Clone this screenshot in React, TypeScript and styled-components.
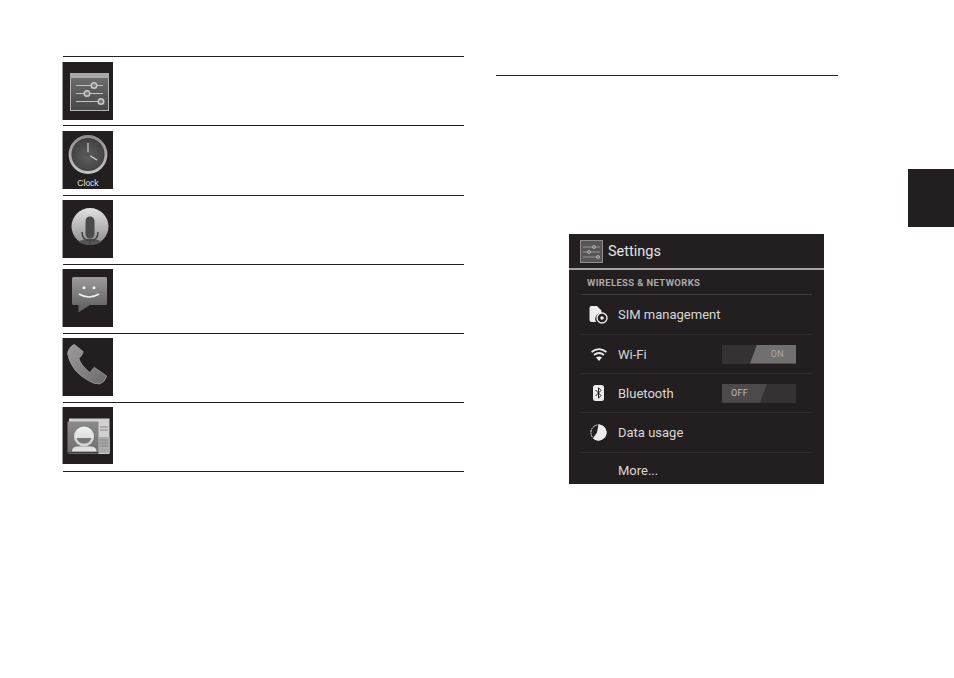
import React from 'react';
import styled, {createGlobalStyle} from 'styled-components';

const GlobalStyle = createGlobalStyle`
  html, body {
    margin: 0;
    padding: 0;
    background: #fff;
  }
`

const tileColor = '#231f20'

const SettingsGlyph = () => (
    <svg width="50" height="58" viewBox="0 0 50 58">
        <defs>
            <linearGradient id="panelBody" x1="0" y1="0" x2="0" y2="1">
                <stop offset="0" stopColor="#707070"/>
                <stop offset="1" stopColor="#474747"/>
            </linearGradient>
        </defs>
        <rect x="8.5" y="11.5" width="38" height="37" fill="url(#panelBody)" stroke="#b5b5b5"/>
        <rect x="8" y="11" width="39" height="5" fill="#a9a9a9"/>
        <path d="M14 23.5H41M14 31.5H41M14 39.5H42" stroke="#c2c2c2" strokeWidth="1.1"/>
        <circle cx="32" cy="23.5" r="2.8" fill="#7b7b7b" stroke="#c8c8c8" strokeWidth="1.4"/>
        <circle cx="25" cy="31.5" r="2.8" fill="#7b7b7b" stroke="#c8c8c8" strokeWidth="1.4"/>
        <circle cx="39" cy="39.5" r="2.8" fill="#7b7b7b" stroke="#c8c8c8" strokeWidth="1.4"/>
    </svg>
)

const ClockGlyph = () => (
    <svg width="50" height="46" viewBox="0 0 50 46">
        <defs>
            <linearGradient id="clockRing" x1="0" y1="0" x2="0" y2="1">
                <stop offset="0" stopColor="#8f8f8f"/>
                <stop offset="1" stopColor="#c4c4c4"/>
            </linearGradient>
            <radialGradient id="clockFace" cx="0.5" cy="0.55" r="0.6">
                <stop offset="0" stopColor="#5f5f5f"/>
                <stop offset="1" stopColor="#3a3a3a"/>
            </radialGradient>
        </defs>
        <circle cx="26" cy="23.5" r="18" fill="url(#clockFace)" stroke="url(#clockRing)" strokeWidth="2.8"/>
        <path d="M26 12V23.5L35 29" fill="none" stroke="#d8d8d8" strokeWidth="1.1"/>
        <circle cx="26" cy="23.5" r="2.6" fill="#555"/>
    </svg>
)

const MicGlyph = () => (
    <svg width="50" height="58" viewBox="0 0 50 58">
        <defs>
            <linearGradient id="micDisc" x1="0" y1="0" x2="0" y2="1">
                <stop offset="0" stopColor="#e2e2e2"/>
                <stop offset="1" stopColor="#8c8c8c"/>
            </linearGradient>
        </defs>
        <circle cx="28" cy="26.5" r="18.5" fill="url(#micDisc)"/>
        <path d="M16 41.5Q28 36 40 41.5Q35 45 28 45Q21 45 16 41.5Z" fill="#555"/>
        <rect x="23.5" y="16.5" width="9" height="22" rx="4.5" fill="#4a4a4a"/>
        <path d="M20 32Q20 40.5 28 40.5Q36 40.5 36 32M28 40.5V45" fill="none" stroke="#444" strokeWidth="1.5"/>
    </svg>
)

const MessageGlyph = () => (
    <svg width="50" height="58" viewBox="0 0 50 58">
        <defs>
            <linearGradient id="bubble" x1="0" y1="0" x2="0" y2="1">
                <stop offset="0" stopColor="#9b9b9b"/>
                <stop offset="1" stopColor="#5c5c5c"/>
            </linearGradient>
        </defs>
        <path d="M11.5 8H43.5Q45 8 45 9.5V34.5Q45 36 43.5 36H28L16.5 43.5V36H11.5Q10 36 10 34.5V9.5Q10 8 11.5 8Z"
              fill="url(#bubble)"/>
        <circle cx="22" cy="18.8" r="1.5" fill="#f2f2f2"/>
        <circle cx="32" cy="18.8" r="1.5" fill="#f2f2f2"/>
        <path d="M17 25Q27 31 37 25" fill="none" stroke="#f2f2f2" strokeWidth="1.7"/>
    </svg>
)

const PhoneGlyph = () => (
    <svg width="50" height="58" viewBox="0 0 50 58">
        <defs>
            <linearGradient id="handset" x1="0" y1="0" x2="1" y2="1">
                <stop offset="0" stopColor="#9c9c9c"/>
                <stop offset="1" stopColor="#6b6b6b"/>
            </linearGradient>
        </defs>
        <path d="M5.5 15.5Q6.5 9.5 12.3 6.3L21.3 13.7Q20 18 17 20.3Q18 24 20.3 27Q24 31.5 28 34.7Q30.5 31 32.3 29.3L44.7 38Q43 44 38 46Q31 46 26.3 42.5Q18 38 13 32Q7 24 5.5 15.5Z"
              fill="url(#handset)" stroke="#b0b0b0" strokeWidth="0.6"/>
    </svg>
)

const ContactGlyph = () => (
    <svg width="50" height="57" viewBox="0 0 50 57">
        <defs>
            <linearGradient id="cardFace" x1="0" y1="0" x2="0" y2="1">
                <stop offset="0" stopColor="#8a8a8a"/>
                <stop offset="1" stopColor="#6e6e6e"/>
            </linearGradient>
            <linearGradient id="cardHead" x1="0" y1="0" x2="0" y2="1">
                <stop offset="0" stopColor="#f0f0f0"/>
                <stop offset="1" stopColor="#d2d2d2"/>
            </linearGradient>
        </defs>
        <rect x="7" y="11.5" width="40.5" height="35.5" fill="#d0d0d0"/>
        <rect x="36.5" y="30" width="11.5" height="16" fill="#a9a9a9"/>
        <rect x="5.5" y="14.5" width="31" height="32" fill="url(#cardFace)"/>
        <path d="M38 20H46M38 23H46M38 33H46M38 36H46M38 39H46" stroke="#888" strokeWidth="1"/>
        <circle cx="22" cy="29.5" r="10" fill="url(#cardHead)"/>
        <path d="M14.5 31H29.5Q28 36.5 22 36.5Q16 36.5 14.5 31Z" fill="#777"/>
        <path d="M10 44.5Q10 39.5 16 39.5H28Q34.5 39.5 34.5 44.5Z" fill="#e0e0e0"/>
        <rect x="5.5" y="45" width="31" height="1.6" fill="#3d3d3d"/>
    </svg>
)

const HeaderGlyph = () => (
    <svg width="23" height="23" viewBox="0 0 23 23">
        <rect x="0.5" y="0.5" width="22" height="22" fill="#565656" stroke="#8d8d8d"/>
        <path d="M3 7H20M3 12H20M3 17H20" stroke="#a5a5a5" strokeWidth="0.8"/>
        <circle cx="14" cy="7" r="1.5" fill="#777" stroke="#bbb" strokeWidth="0.8"/>
        <circle cx="9" cy="12" r="1.5" fill="#777" stroke="#bbb" strokeWidth="0.8"/>
        <circle cx="18" cy="17" r="1.5" fill="#777" stroke="#bbb" strokeWidth="0.8"/>
    </svg>
)

const SimIcon = () => (
    <svg width="19" height="19" viewBox="0 0 19 19">
        <path d="M0.5 3Q0.5 1 2.5 1H8L12.5 5.5V8A6 6 0 0 0 7 17H2.5Q0.5 17 0.5 15Z" fill="#ececec"/>
        <circle cx="13" cy="13" r="5" fill="none" stroke="#ececec" strokeWidth="1.4"/>
        <circle cx="13" cy="13" r="1.8" fill="#ececec"/>
    </svg>
)

const WifiIcon = () => (
    <svg width="16" height="13" viewBox="0 0 16 13">
        <path d="M0.6 4Q8 -1.6 15.4 4" fill="none" stroke="#ececec" strokeWidth="1.8"/>
        <path d="M3 7Q8 3 13 7" fill="none" stroke="#ececec" strokeWidth="1.8"/>
        <path d="M5 9.6Q8 7.4 11 9.6L8 13Z" fill="#ececec"/>
    </svg>
)

const BluetoothIcon = () => (
    <svg width="11" height="16" viewBox="0 0 11 16">
        <rect width="11" height="16" rx="2.5" fill="#ececec"/>
        <path d="M2.6 5L8 10.6L5.5 13.2V2.8L8 5.4L2.6 11" fill="none" stroke="#231f20" strokeWidth="1"/>
    </svg>
)

const DataIcon = () => (
    <svg width="17" height="17" viewBox="0 0 17 17">
        <circle cx="8.5" cy="8.5" r="7.6" fill="none" stroke="#ececec" strokeWidth="1" strokeDasharray="2 0.7"/>
        <path d="M8.5 0.5A8 8 0 1 1 3 14.3L7 8.5Z" fill="#ececec"/>
    </svg>
)

const leftIcons = [
    {glyph: <SettingsGlyph/>, rowHeight: 69, top: 5},
    {glyph: <ClockGlyph/>, caption: 'Clock', rowHeight: 70, top: 5},
    {glyph: <MicGlyph/>, rowHeight: 69, top: 4},
    {glyph: <MessageGlyph/>, rowHeight: 69, top: 4},
    {glyph: <PhoneGlyph/>, rowHeight: 69, top: 4},
    {glyph: <ContactGlyph/>, rowHeight: 69, top: 4},
]

const App = () => {
    return (
        <Page>
            <GlobalStyle/>
            <LeftColumn>
                {leftIcons.map((item, index) => (
                    <IconRow key={index} $height={item.rowHeight} $top={item.top}>
                        <Tile $short={index === 5}>
                            {item.glyph}
                            {item.caption && <TileCaption>{item.caption}</TileCaption>}
                        </Tile>
                    </IconRow>
                ))}
            </LeftColumn>
            <RightColumn>
                <HeadingRule/>
                <Screen>
                    <ScreenHeader>
                        <HeaderIcon><HeaderGlyph/></HeaderIcon>
                        <ScreenTitle>Settings</ScreenTitle>
                    </ScreenHeader>
                    <SectionLabel>WIRELESS &amp; NETWORKS</SectionLabel>
                    <SettingRow $height={40}>
                        <IconSlot><SimIcon/></IconSlot>
                        <SettingName>SIM management</SettingName>
                    </SettingRow>
                    <SettingRow $height={39}>
                        <IconSlot><WifiIcon/></IconSlot>
                        <SettingName>Wi-Fi</SettingName>
                        <Toggle $on>
                            <Thumb $on>ON</Thumb>
                        </Toggle>
                    </SettingRow>
                    <SettingRow $height={39}>
                        <IconSlot><BluetoothIcon/></IconSlot>
                        <SettingName>Bluetooth</SettingName>
                        <Toggle>
                            <Thumb>OFF</Thumb>
                        </Toggle>
                    </SettingRow>
                    <SettingRow $height={40}>
                        <IconSlot><DataIcon/></IconSlot>
                        <SettingName>Data usage</SettingName>
                    </SettingRow>
                    <SettingRow $height={34} $last>
                        <IconSlot/>
                        <SettingName>More...</SettingName>
                    </SettingRow>
                </Screen>
            </RightColumn>
            <SideTab/>
        </Page>
    );
};

export default App;

const Page = styled.div`
  display: flex;
  align-items: flex-start;
  width: 954px;
  height: 678px;
  overflow: hidden;
  background: #fff;
`

const LeftColumn = styled.div`
  display: flex;
  flex-direction: column;
  flex: none;
  width: 401px;
  margin: 56px 0 0 63px;
  border-bottom: 1px solid #231f20;
`

const IconRow = styled.div<{ $height: number; $top: number }>`
  box-sizing: border-box;
  height: ${p => p.$height}px;
  padding-top: ${p => p.$top}px;
  border-top: 1px solid #231f20;
`

const Tile = styled.div<{ $short?: boolean }>`
  display: flex;
  flex-direction: column;
  align-items: flex-start;
  width: 50px;
  height: ${p => (p.$short ? 57 : 58)}px;
  margin-left: -1px;
  border-left: 1px solid #9a9a9a;
  background: ${tileColor};

  svg {
    display: block;
    margin-left: -1px;
    filter: blur(0.6px);
  }
`

const TileCaption = styled.span`
  align-self: center;
  font-family: "Liberation Sans", Arial, sans-serif;
  font-size: 8.5px;
  line-height: 10px;
  color: #e0e0e0;
  margin-top: 1px;
`

const RightColumn = styled.div`
  display: flex;
  flex-direction: column;
  flex: none;
  width: 342px;
  margin: 75px 0 0 32px;
`

const HeadingRule = styled.div`
  height: 1px;
  background: #231f20;
`

const Screen = styled.div`
  display: flex;
  flex-direction: column;
  width: 255px;
  height: 250px;
  margin: 158px 0 0 73px;
  overflow: hidden;
  background: ${tileColor};
  font-family: Roboto, "Liberation Sans", sans-serif;
  color: #d8d8d8;
`

const ScreenHeader = styled.div`
  display: flex;
  align-items: center;
  flex: none;
  height: 34px;
  padding-left: 11px;
  border-bottom: 2px solid #a3a3a3;
`

const HeaderIcon = styled.div`
  display: flex;
  flex: none;
  margin-right: 5px;
`

const ScreenTitle = styled.span`
  font-size: 14.5px;
  color: #e2e2e2;
`

const SectionLabel = styled.div`
  flex: none;
  height: 24px;
  line-height: 25px;
  margin: 0 12px;
  padding-left: 6px;
  border-bottom: 1px solid #3f3c3d;
  font-size: 9.5px;
  font-weight: 700;
  letter-spacing: 0.35px;
  color: #a9a9a9;
`

const SettingRow = styled.div<{ $height: number; $last?: boolean }>`
  box-sizing: border-box;
  display: flex;
  align-items: center;
  flex: none;
  height: ${p => p.$height}px;
  margin: 0 12px;
  border-bottom: ${p => (p.$last ? 'none' : '1px solid #2f2c2d')};
`

const IconSlot = styled.div`
  display: flex;
  justify-content: center;
  flex: none;
  width: 35px;
  margin-right: 2px;
`

const SettingName = styled.span`
  font-size: 13px;
`

const Toggle = styled.div<{ $on?: boolean }>`
  display: flex;
  justify-content: ${p => (p.$on ? 'flex-end' : 'flex-start')};
  width: 74px;
  height: 19px;
  margin-left: auto;
  margin-right: 16px;
  background: #343233;
`

const Thumb = styled.div<{ $on?: boolean }>`
  display: flex;
  align-items: center;
  justify-content: ${p => (p.$on ? 'flex-end' : 'flex-start')};
  box-sizing: border-box;
  width: ${p => (p.$on ? 46 : 45)}px;
  padding: ${p => (p.$on ? '0 12px 0 0' : '0 0 0 9px')};
  background: ${p => (p.$on ? '#707070' : '#4c4a4b')};
  clip-path: ${p => (p.$on
    ? 'polygon(7px 0, 100% 0, 100% 100%, 0 100%)'
    : 'polygon(0 0, 100% 0, calc(100% - 7px) 100%, 0 100%)')};
  font-size: 9px;
  letter-spacing: 0.3px;
  color: ${p => (p.$on ? '#a8a8a8' : '#bdbdbd')};
`

const SideTab = styled.div`
  flex: none;
  width: 46px;
  height: 58px;
  margin: 169px 0 0 auto;
  background: ${tileColor};
`
